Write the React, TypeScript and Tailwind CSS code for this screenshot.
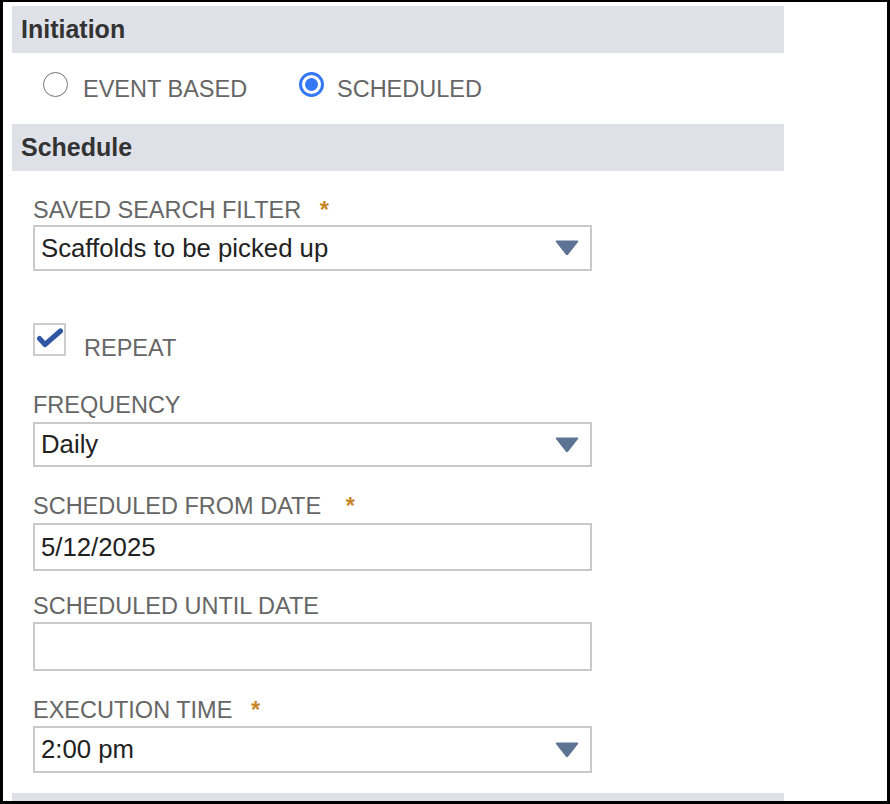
import React from 'react';

const font = { fontFamily: '"Liberation Sans", Arial, sans-serif' };

const Star: React.FC<{ className?: string }> = ({ className = 'ml-3' }) => (
  <span className={`${className} font-bold text-[#c8862a]`}>*</span>
);

const Arrow: React.FC = () => (
  <svg width="24" height="16" viewBox="0 0 24 16" className="shrink-0">
    <path d="M1.5 0.5 H22.5 Q24 0.5 23 2 L13.2 14.6 Q12 16 10.8 14.6 L1 2 Q0 0.5 1.5 0.5 Z" fill="#5d7394" />
  </svg>
);

const SectionHeader: React.FC<{ title: string }> = ({ title }) => (
  <div className="h-[47px] w-[772px] bg-[#dfe1e8] flex items-center pl-[9px] text-[25px] font-bold text-[#333333]">
    {title}
  </div>
);

const Label: React.FC<{ children: React.ReactNode; className?: string }> = ({ children, className = '' }) => (
  <div className={`h-6 leading-6 text-[23.5px] text-[#666666] whitespace-nowrap ${className}`}>{children}</div>
);

const Field: React.FC<{ value?: string; select?: boolean; className?: string }> = ({ value, select, className = '' }) => (
  <div
    className={`w-[559px] border-2 border-[#c9c9c9] bg-white flex items-center justify-between pl-[6px] pr-[11px] text-[25.75px] text-[#222222] ${className}`}
  >
    <span>{value}</span>
    {select && <Arrow />}
  </div>
);

const App: React.FC = () => {
  return (
    <div
      style={font}
      className="w-[890px] h-[804px] bg-white border-black border-t-2 border-l-[3px] border-r-[3px] border-b-[3px] pl-[9px] overflow-hidden"
    >
      <div className="mt-1">
        <SectionHeader title="Initiation" />
      </div>

      {/* initiation type */}
      <div className="h-[71px] pt-[19px] pl-[31px] flex text-[23.5px] text-[#666666]">
        <div className="w-[256px] h-[25px] flex items-center">
          <span className="w-[25px] h-[25px] rounded-full border-[1.5px] border-[#737373] bg-white shrink-0" />
          <span className="ml-[15px] mt-2 leading-6">EVENT BASED</span>
        </div>
        <div className="h-[25px] flex items-center">
          <span className="w-[25px] h-[25px] rounded-full border-[3px] border-[#3478f6] flex items-center justify-center shrink-0">
            <span className="w-[13px] h-[13px] rounded-full bg-[#3478f6]" />
          </span>
          <span className="ml-[13px] mt-2 leading-6">SCHEDULED</span>
        </div>
      </div>

      <SectionHeader title="Schedule" />

      <div className="pl-[21px]">
        <Label className="mt-[27px]">
          SAVED SEARCH FILTER <Star />
        </Label>
        <Field className="mt-[3px] h-[46px]" value="Scaffolds to be picked up" select />

        <div className="mt-[52px] h-[38px] flex items-start">
          <div className="w-[33px] h-[33px] border-2 border-[#cccccc] bg-white shrink-0">
            <svg width="29" height="29" viewBox="0 0 29 29">
              <path
                d="M4.5 13.5 L10 19.5 L25.5 6"
                fill="none"
                stroke="#2f56a3"
                strokeWidth="5"
                strokeLinecap="round"
                strokeLinejoin="round"
              />
            </svg>
          </div>
          <span className="ml-[18px] mt-3 leading-[26px] text-[23.5px] text-[#666666]">REPEAT</span>
        </div>

        <Label className="mt-[32px]">FREQUENCY</Label>
        <Field className="mt-[5px] h-[45px]" value="Daily" select />

        <Label className="mt-[27px]">
          SCHEDULED FROM DATE <Star className="ml-[18px]" />
        </Label>
        <Field className="mt-[5px] h-[48px]" value="5/12/2025" />

        <Label className="mt-[23px]">SCHEDULED UNTIL DATE</Label>
        <Field className="mt-1 h-[49px]" />

        <Label className="mt-[27px]">
          EXECUTION TIME <Star />
        </Label>
        <Field className="mt-1 h-[47px]" value="2:00 pm" select />
      </div>

      <div className="mt-[20px] h-6 w-[772px] bg-[#dfe1e8]" />
    </div>
  );
};

export default App;
